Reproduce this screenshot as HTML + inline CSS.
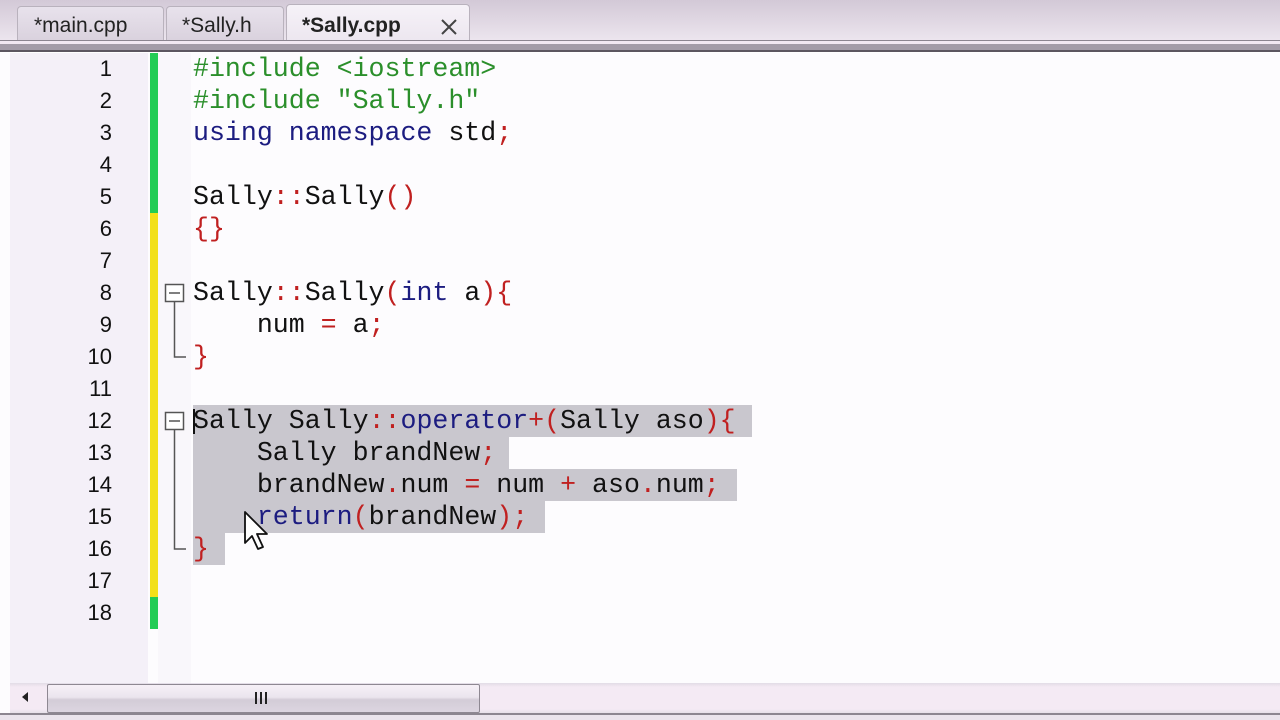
<!DOCTYPE html>
<html><head><meta charset="utf-8"><style>
*{margin:0;padding:0;box-sizing:border-box}
body{width:1280px;height:720px;overflow:hidden;background:#fdfcfe;position:relative;font-family:"Liberation Sans",sans-serif}
.top{position:absolute;left:0;top:0;width:1280px;height:42px;background:linear-gradient(#d3c9d7,#ede6ef)}
.sep{position:absolute;left:0;top:40px;width:1280px;height:13px;background:linear-gradient(#8c8590 0 1px,#f2e8f2 1px 4px,#a49ca8 4px 10px,#5c5660 10px 12px,#fff 12px)}
.tab{position:absolute;top:6px;height:36px;border:1px solid #b9b2bd;border-bottom:none;border-radius:4px 4px 0 0;background:linear-gradient(#e8e2ec,#d9d1dd);font-size:21px;color:#222;padding-top:7px}
.left{position:absolute;left:0;top:0;width:10px;height:720px;background:linear-gradient(90deg,#8a848e,#d7d0da 3px,#a9a2ad 5px,#6e6872 7px,#e8e2ea 9px)}
.gut{position:absolute;left:10px;top:53px;width:138px;height:630px;background:#f4f0f8}
.fold{position:absolute;left:158px;top:53px;width:33px;height:630px;background:#f9f7fb}
.ln{position:absolute;left:10px;width:102px;text-align:right;font-size:22px;color:#111}
.code{position:absolute;left:193px;font-family:"Liberation Mono",monospace;font-size:26.6px;white-space:pre;color:#111;line-height:32px}
.p{color:#2b8f2b}.k{color:#1c1c80}.r{color:#c02020}
.sel{position:absolute;background:#c9c7ce}
.sb{position:absolute;left:10px;top:683px;width:1270px;height:30px;background:linear-gradient(#e2dce6,#f4eaf4 4px,#f4eaf4 26px,#e6e0e8)}
</style></head><body>
<div class="top"></div>
<div class="tab" style="left:17px;width:147px;padding-left:16px">*main.cpp</div>
<div class="tab" style="left:166px;width:118px;padding-left:15px">*Sally.h</div>
<div class="tab" style="left:286px;width:184px;height:38px;top:4px;background:linear-gradient(#f6f2f8,#ece6ef);padding-left:15px;padding-top:9px;font-weight:bold">*Sally.cpp
<svg style="position:absolute;left:153px;top:13px" width="18" height="18"><path d="M2 2L16 16M16 2L2 16" stroke="#444" stroke-width="2"/></svg></div>
<div class="sep"></div>
<div class="gut"></div><div class="fold"></div>
<div style="position:absolute;left:150px;top:53px;width:8px;height:160px;background:#22cc55"></div>
<div style="position:absolute;left:150px;top:213px;width:8px;height:384px;background:#f2e01a"></div>
<div style="position:absolute;left:150px;top:597px;width:8px;height:32px;background:#22cc55"></div>
<div class="sel" style="left:193px;top:405px;width:559px;height:32px"></div>
<div class="sel" style="left:193px;top:437px;width:316px;height:32px"></div>
<div class="sel" style="left:193px;top:469px;width:544px;height:32px"></div>
<div class="sel" style="left:193px;top:501px;width:352px;height:32px"></div>
<div class="sel" style="left:193px;top:533px;width:32px;height:32px"></div>
<div class="ln" style="top:56px">1</div><div class="ln" style="top:88px">2</div><div class="ln" style="top:120px">3</div><div class="ln" style="top:152px">4</div><div class="ln" style="top:184px">5</div><div class="ln" style="top:216px">6</div><div class="ln" style="top:248px">7</div><div class="ln" style="top:280px">8</div><div class="ln" style="top:312px">9</div><div class="ln" style="top:344px">10</div><div class="ln" style="top:376px">11</div><div class="ln" style="top:408px">12</div><div class="ln" style="top:440px">13</div><div class="ln" style="top:472px">14</div><div class="ln" style="top:504px">15</div><div class="ln" style="top:536px">16</div><div class="ln" style="top:568px">17</div><div class="ln" style="top:600px">18</div>
<svg style="position:absolute;left:160px;top:280px" width="30" height="290"><g fill="none" stroke="#555" stroke-width="1.5"><rect x="5.5" y="4.5" width="18" height="17" fill="#fff"/><path d="M9 13H20M14.5 22V77H26"/><rect x="5.5" y="132.5" width="18" height="17" fill="#fff"/><path d="M9 141H20M14.5 150V269H26"/></g></svg>
<div class="code" style="top:53px"><span class="p">#include &lt;iostream&gt;
#include "Sally.h"</span>
<span class="k">using namespace</span> std<span class="r">;</span>

Sally<span class="r">::</span>Sally<span class="r">()</span>
<span class="r">{}</span>

Sally<span class="r">::</span>Sally<span class="r">(</span><span class="k">int</span> a<span class="r">){</span>
    num <span class="r">=</span> a<span class="r">;</span>
<span class="r">}</span>

Sally Sally<span class="r">::</span><span class="k">operator</span><span class="r">+(</span>Sally aso<span class="r">){</span>
    Sally brandNew<span class="r">;</span>
    brandNew<span class="r">.</span>num <span class="r">=</span> num <span class="r">+</span> aso<span class="r">.</span>num<span class="r">;</span>
    <span class="k">return</span><span class="r">(</span>brandNew<span class="r">);</span>
<span class="r">}</span>
</div>
<div style="position:absolute;left:193px;top:409px;width:2px;height:25px;background:#111"></div>
<svg style="position:absolute;left:243px;top:510px" width="30" height="42"><path d="M2 2V33L9 26L15 39L20 37L14 24H24Z" fill="#fff" stroke="#111" stroke-width="1.8" stroke-linejoin="round"/></svg>
<div class="sb"></div>
<svg style="position:absolute;left:18px;top:689px" width="14" height="16"><path d="M10 3L4 8L10 13Z" fill="#222"/></svg>
<div style="position:absolute;left:47px;top:684px;width:433px;height:29px;border:1px solid #8e8892;border-radius:2px;background:linear-gradient(#f6f0f7,#ebe5ee 45%,#d3ccd7 55%,#dcd5e0)"></div>
<svg style="position:absolute;left:253px;top:690px" width="18" height="16"><path d="M3 2V14M8 2V14M13 2V14" stroke="#222" stroke-width="2"/></svg>
<div style="position:absolute;left:0;top:713px;width:1280px;height:7px;background:linear-gradient(#8c8690 0 2px,#eae4ec 2px)"></div>
</body></html>
